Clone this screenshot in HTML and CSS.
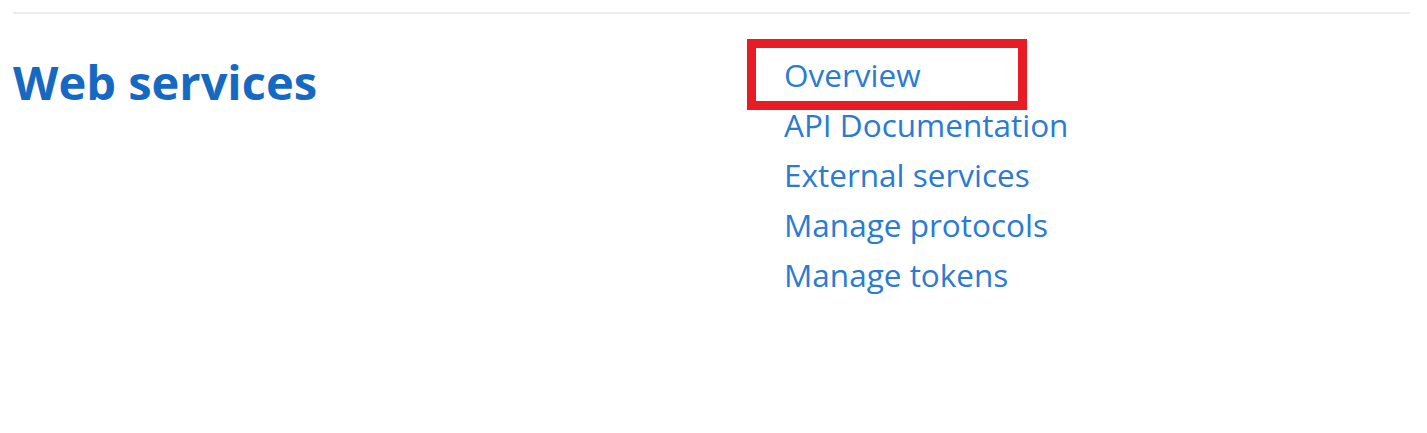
FILE: index.html
```html
<!DOCTYPE html>
<html lang="en">
<head>
<meta charset="utf-8">
<title>Web services</title>
<link rel="stylesheet" href="styles.css">
</head>
<body>
<div class="page">
  <hr class="divider">
  <section class="category">
    <h2 class="category-title">Web services</h2>
    <ul class="links">
      <li class="highlighted"><a class="link" href="#">Overview</a></li>
      <li><a class="link" href="#">API Documentation</a></li>
      <li><a class="link" href="#">External services</a></li>
      <li><a class="link" href="#">Manage protocols</a></li>
      <li><a class="link" href="#">Manage tokens</a></li>
    </ul>
  </section>
</div>
</body>
</html>
```
FILE: styles.css
```css
html, body {
  margin: 0;
  padding: 0;
  background: #ffffff;
}
body {
  font-family: "Open Sans", "Noto Sans", sans-serif;
}
.page {
  padding: 12px 17px 0 13px;
}
.divider {
  border: 0;
  height: 2px;
  background: #ececec;
  margin: 0;
}
.category {
  display: flex;
  padding-top: 40px;
}
.category-title {
  width: 771px;
  margin: 0;
  font-size: 47px;
  font-weight: 700;
  color: #1569c2;
  line-height: 60px;
  margin-top: -2px;
}
.links {
  list-style: none;
  margin: -4px 0 0 0;
  padding: 0;
  display: flex;
  flex-direction: column;
}
.links li {
  height: 50px;
  position: relative;
}
.link {
  font-size: 31.5px;
  line-height: 50px;
  color: #2a7bd1;
  text-decoration: none;
}
.highlighted::after {
  content: "";
  position: absolute;
  left: -37px;
  top: -11px;
  width: 262px;
  height: 53px;
  border: 9px solid #e81c24;
  pointer-events: none;
}
```
